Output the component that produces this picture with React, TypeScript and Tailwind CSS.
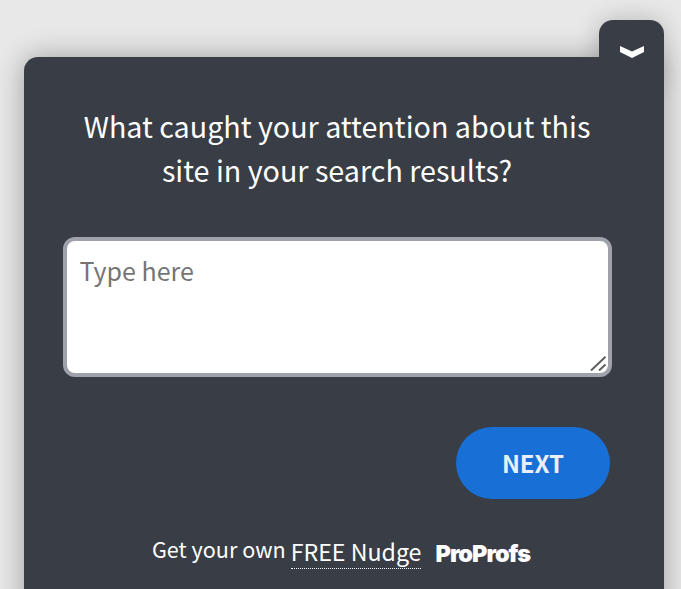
const sans = { fontFamily: '"Noto Sans CJK SC", "Noto Sans", sans-serif' };

function NudgeToggle() {
  return (
    <>
      <div className="absolute right-0 top-[-37px] -z-10 h-[60px] w-[65px] rounded-t-[14px] shadow-[0_0_24px_rgba(0,0,0,0.22)]" />
      <button className="absolute right-0 top-[-37px] flex h-[60px] w-[65px] justify-center rounded-t-[14px] bg-[#393d46] pt-[26px]">
        <svg width="24" height="12" viewBox="0 0 24 12" aria-hidden>
          <path d="M0 0 L12 5.5 L24 0 V6 L12 12 L0 6 Z" fill="#fff" />
        </svg>
      </button>
    </>
  );
}

function ResizeGrip() {
  return (
    <svg className="pointer-events-none absolute bottom-[6px] right-[5px]" width="17" height="15" viewBox="0 0 17 15" aria-hidden>
      <path d="M1 14.5 L15.5 0.8 M9 14.5 L15.5 8.5" stroke="#5f5f5f" strokeWidth="2" fill="none" />
    </svg>
  );
}

export default function App() {
  return (
    <div className="isolate h-[589px] overflow-hidden bg-[#e8e8e8] pl-6 pr-[17px] pt-[57px]" style={sans}>
      <div className="relative h-[600px] rounded-t-[14px] bg-[#393d46] shadow-[0_0_28px_rgba(0,0,0,0.32)]">
        <NudgeToggle />
        <div className="relative flex flex-col px-[39px] pt-[47px]">
          <h1 className="pr-[14px] text-center text-[28.7px] font-normal leading-[44px] text-white">
            What caught your attention about this
            <br />
            site in your search results?
          </h1>
          <div className="relative mt-[45px] h-[140px] w-[549px]">
            <textarea
              className="block h-full w-full resize-none rounded-[12px] border-4 border-[#9fa2ab] bg-white px-[12.5px] pb-[5px] pt-[11px] text-[25px] leading-[36px] text-[#333] outline-none placeholder:text-[#757575]"
              placeholder="Type here"
            />
            <ResizeGrip />
          </div>
          <div className="mt-[50px] flex justify-end pr-[15px]">
            <button className="h-[72px] w-[154px] rounded-full bg-[#186fd5] text-[24px] font-bold text-[#e9eff7]">NEXT</button>
          </div>
          <div className="mt-[33px] flex items-start justify-center pr-[6px] text-white">
            <span className="mt-[1px] text-[21.6px] leading-[32px]">Get your own</span>
            <a className="ml-[5px] mt-[2px] border-b border-dotted border-white text-[23.2px] leading-[34px]">FREE Nudge</a>
            <span
              className="ml-[14px] mt-[6px] text-[23.5px] font-black leading-[32px] tracking-[-1px]"
              style={{ fontFamily: "Inter, sans-serif" }}
            >
              ProProfs
            </span>
          </div>
        </div>
      </div>
    </div>
  );
}
